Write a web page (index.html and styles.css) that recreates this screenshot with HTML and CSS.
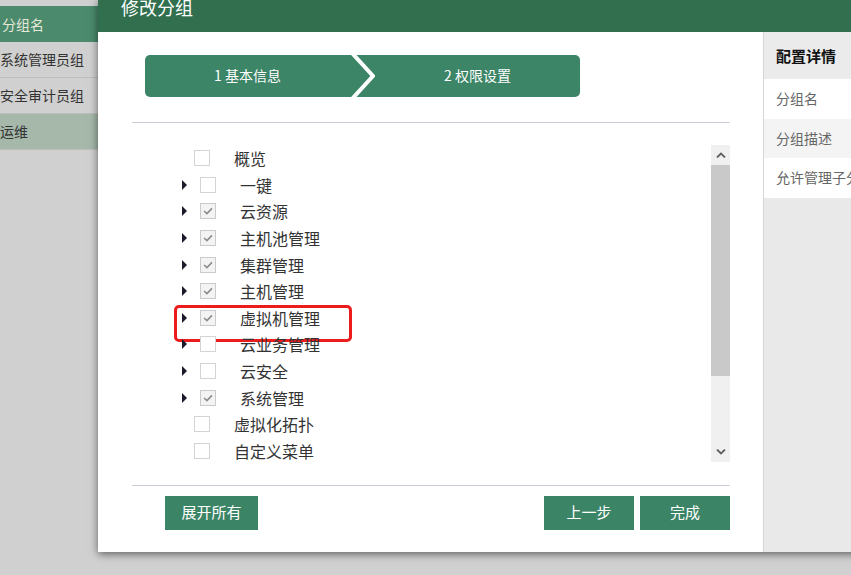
FILE: index.html
```html
<!DOCTYPE html>
<html lang="zh-CN">
<head>
    <meta charset="UTF-8">
    <title>修改分组</title>
    <link rel="stylesheet" href="styles.css">
</head>
<body>
    <div class="sidebar">
        <div class="side-head">分组名</div>
        <div class="side-row">系统管理员组</div>
        <div class="side-row">安全审计员组</div>
        <div class="side-row active">运维</div>
    </div>

    <div class="modal">
        <div class="modal-header">
            <h2>修改分组</h2>
        </div>
        <div class="modal-body">
            <div class="main">
                <div class="steps">
                    <div class="step">1 基本信息</div>
                    <svg class="step-arrow" width="25" height="42" viewBox="0 0 25 42">
                        <polyline points="2,-2 23,21 2,44" fill="none" stroke="#fff" stroke-width="4"/>
                    </svg>
                    <div class="step">2 权限设置</div>
                </div>

                <div class="divider"></div>

                <div class="tree">
                    <ul class="tree-list">
                        <li class="node leaf"><span class="box"></span><span class="label">概览</span></li>
                        <li class="node"><span class="toggle"></span><span class="box"></span><span class="label">一键</span></li>
                        <li class="node"><span class="toggle"></span><span class="box checked"><svg viewBox="0 0 16 16"><polyline points="3.5,8 6.8,11 12.5,5" /></svg></span><span class="label">云资源</span></li>
                        <li class="node"><span class="toggle"></span><span class="box checked"><svg viewBox="0 0 16 16"><polyline points="3.5,8 6.8,11 12.5,5" /></svg></span><span class="label">主机池管理</span></li>
                        <li class="node"><span class="toggle"></span><span class="box checked"><svg viewBox="0 0 16 16"><polyline points="3.5,8 6.8,11 12.5,5" /></svg></span><span class="label">集群管理</span></li>
                        <li class="node"><span class="toggle"></span><span class="box checked"><svg viewBox="0 0 16 16"><polyline points="3.5,8 6.8,11 12.5,5" /></svg></span><span class="label">主机管理</span></li>
                        <li class="node marked"><span class="toggle"></span><span class="box checked"><svg viewBox="0 0 16 16"><polyline points="3.5,8 6.8,11 12.5,5" /></svg></span><span class="label">虚拟机管理</span></li>
                        <li class="node"><span class="toggle"></span><span class="box"></span><span class="label">云业务管理</span></li>
                        <li class="node"><span class="toggle"></span><span class="box"></span><span class="label">云安全</span></li>
                        <li class="node"><span class="toggle"></span><span class="box checked"><svg viewBox="0 0 16 16"><polyline points="3.5,8 6.8,11 12.5,5" /></svg></span><span class="label">系统管理</span></li>
                        <li class="node leaf"><span class="box"></span><span class="label">虚拟化拓扑</span></li>
                        <li class="node leaf"><span class="box"></span><span class="label">自定义菜单</span></li>
                    </ul>
                    <div class="scrollbar">
                        <div class="sb-btn">
                            <svg width="10" height="6" viewBox="0 0 10 6"><polyline points="1,5.5 5,1.5 9,5.5" fill="none" stroke="#606060" stroke-width="1.8"/></svg>
                        </div>
                        <div class="sb-thumb"></div>
                        <div class="sb-track"></div>
                        <div class="sb-btn">
                            <svg width="10" height="6" viewBox="0 0 10 6"><polyline points="1,0.5 5,4.5 9,0.5" fill="none" stroke="#606060" stroke-width="1.8"/></svg>
                        </div>
                    </div>
                </div>

                <div class="divider"></div>

                <div class="actions">
                    <button class="btn">展开所有</button>
                    <div class="spacer"></div>
                    <button class="btn">上一步</button>
                    <button class="btn">完成</button>
                </div>
            </div>

            <div class="details">
                <div class="details-head">配置详情</div>
                <div class="details-row">分组名</div>
                <div class="details-row alt">分组描述</div>
                <div class="details-row">允许管理子分组</div>
            </div>
        </div>
    </div>
</body>
</html>
```

FILE: styles.css
```css
* {
    margin: 0;
    padding: 0;
    box-sizing: border-box;
    font-family: "Noto Sans CJK SC", "Liberation Sans", sans-serif;
}

body {
    width: 851px;
    height: 575px;
    overflow: hidden;
    background-color: #d0d0d0;
    display: flex;
    align-items: flex-start;
}

/* dimmed page behind the dialog */
.sidebar {
    width: 98px;
    flex-shrink: 0;
    padding-top: 6px;
    font-size: 14px;
    white-space: nowrap;
    overflow: hidden;
}

.side-head {
    height: 36px;
    line-height: 36px;
    padding-left: 2px;
    background-color: #4b8a6d;
    color: #e6e8d8;
}

.side-row {
    height: 36px;
    line-height: 35px;
    color: #333;
    border-bottom: 1px solid #bdbdbd;
}

.side-row.active {
    background-color: #a5b8aa;
}

/* dialog */
.modal {
    width: 860px;
    height: 552px;
    flex-shrink: 0;
    background-color: white;
    box-shadow: 0 2px 8px rgba(0, 0, 0, 0.55);
    display: flex;
    flex-direction: column;
}

.modal-header {
    height: 32px;
    background-color: #316f4f;
    padding-left: 23px;
}

.modal-header h2 {
    font-size: 18px;
    font-weight: normal;
    line-height: 15px;
    color: white;
}

.modal-body {
    flex: 1;
    display: flex;
}

.main {
    width: 665px;
    padding: 23px 33px 0 34px;
}

.steps {
    width: 435px;
    height: 42px;
    margin-left: 13px;
    background-color: #3c8567;
    border-radius: 5px;
    display: flex;
    overflow: hidden;
}

.step {
    flex: 1;
    text-align: center;
    line-height: 40px;
    color: white;
    font-size: 14px;
}

.step-arrow {
    flex-shrink: 0;
}

.divider {
    height: 1px;
    background-color: #cfccdc;
}

.steps + .divider {
    margin-top: 25px;
}

/* permission tree */
.tree {
    height: 362px;
    padding: 22px 0 23px 0;
    display: flex;
}

.tree-list {
    flex: 1;
    list-style: none;
    overflow: hidden;
}

.node {
    position: relative;
    height: 26.6px;
    display: flex;
    align-items: center;
    padding-left: 50px;
    font-size: 16px;
    color: #333;
}

.node.leaf {
    padding-left: 62px;
}

.toggle {
    width: 0;
    height: 0;
    border-left: 5px solid #1a1a2a;
    border-top: 5px solid transparent;
    border-bottom: 5px solid transparent;
    margin-right: 13px;
}

.box {
    width: 16px;
    height: 16px;
    border: 1px solid #d4d4d4;
    background-color: white;
    display: flex;
}

.box.checked {
    background-color: #f3f3f3;
    border-color: #cbcbcb;
}

.box svg {
    width: 14px;
    height: 14px;
    fill: none;
    stroke: #8a8a8a;
    stroke-width: 1.7;
}

.label {
    margin-left: 24px;
    line-height: 20px;
}

.node.marked::after {
    content: "";
    position: absolute;
    left: 42px;
    top: 0;
    width: 172px;
    height: 31px;
    border: 3px solid #ec1c1c;
    border-radius: 5px;
}

.scrollbar {
    width: 19px;
    background-color: #f0f0f0;
    display: flex;
    flex-direction: column;
}

.sb-btn {
    height: 20px;
    display: flex;
    align-items: center;
    justify-content: center;
}

.sb-thumb {
    height: 211px;
    background-color: #c9c9c9;
}

.sb-track {
    flex: 1;
}

.actions {
    display: flex;
    gap: 6px;
    padding: 10px 0 0 33px;
}

.spacer {
    flex: 1;
}

.btn {
    width: 90px;
    height: 34px;
    padding-bottom: 3px;
    border: none;
    background-color: #3b8466;
    color: white;
    font-size: 15px;
}

.actions .btn:first-child {
    width: 93px;
}

/* right detail panel */
.details {
    flex: 1;
    background-color: #e9e9e9;
    border-left: 1px solid #d6d6d6;
    white-space: nowrap;
    overflow: hidden;
}

.details-head {
    height: 47px;
    line-height: 47px;
    padding-left: 12px;
    background-color: #ebebeb;
    color: #111;
    font-size: 15px;
    font-weight: bold;
}

.details-row {
    height: 39.5px;
    line-height: 39px;
    padding-left: 12px;
    background-color: white;
    color: #666;
    font-size: 14px;
}

.details-row.alt {
    background-color: #f4f4f4;
}
```
